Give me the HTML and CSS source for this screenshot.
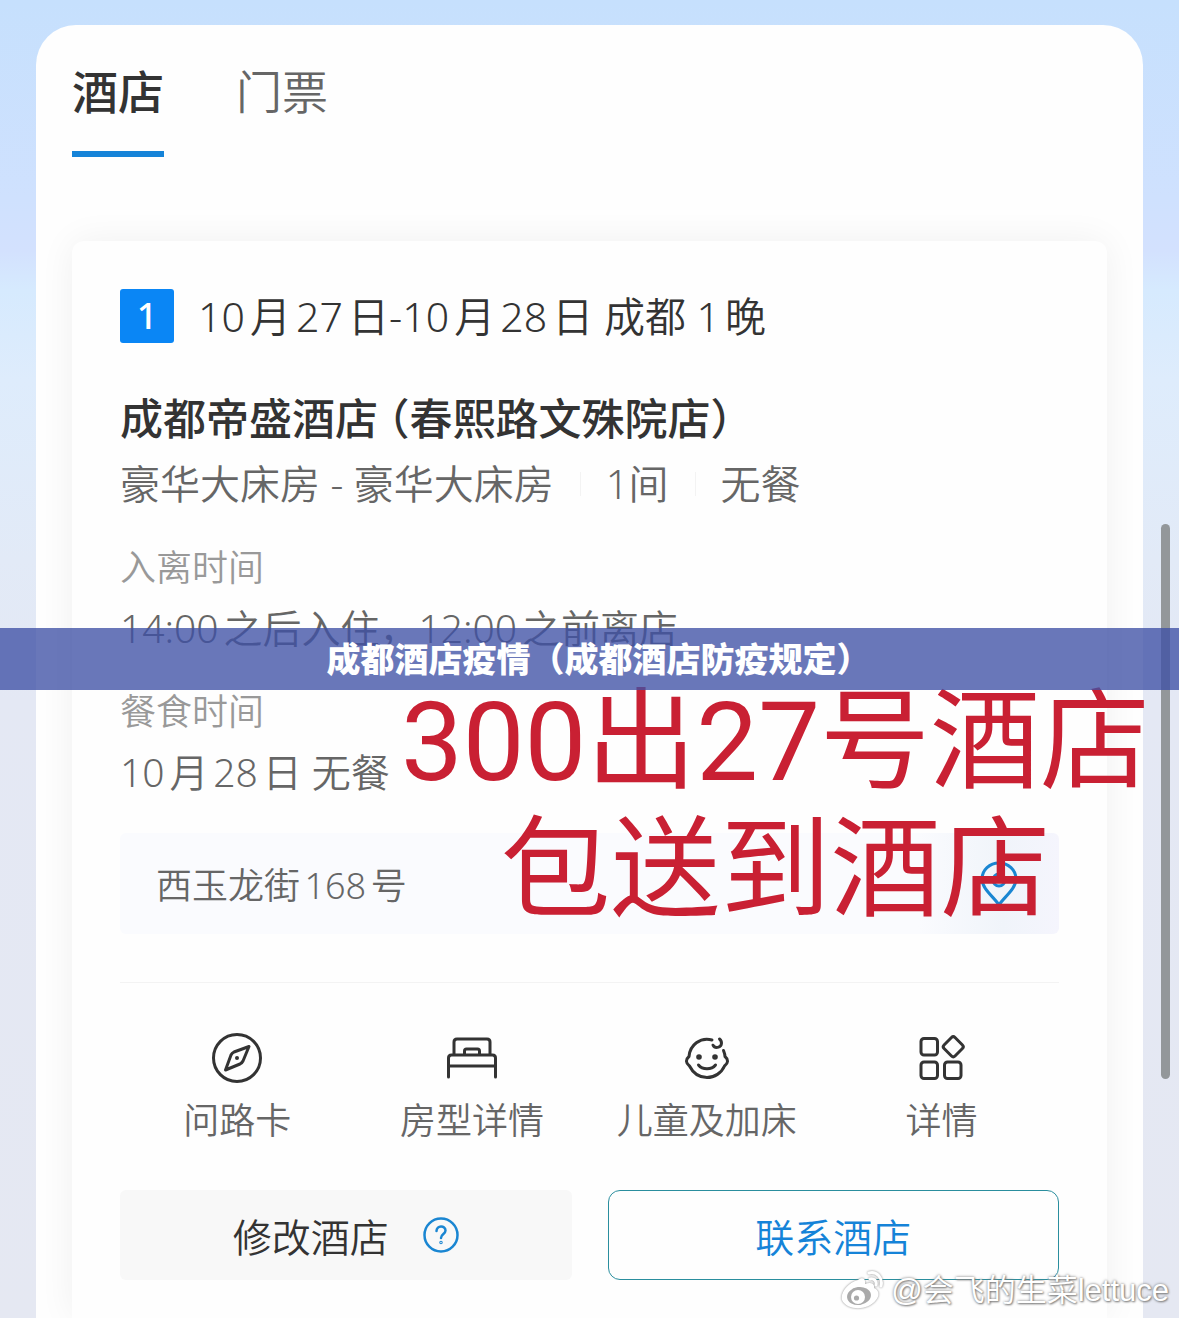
FILE: index.html
```html
<!DOCTYPE html>
<html lang="zh-CN">
<head>
    <meta charset="utf-8">
    <meta name="viewport" content="width=device-width, initial-scale=1">
    <title>成都酒店疫情（成都酒店防疫规定）</title>
    <link rel="stylesheet" href="styles.css">
</head>
<body>
    <main class="sheet">
        <nav class="tabs">
            <a class="tab active" href="#hotel">酒店</a>
            <a class="tab" href="#ticket">门票</a>
        </nav>

        <section class="card" id="hotel">
            <div class="stay">
                <span class="badge">1</span>
                <span>10月27日-10月28日 成都 1晚</span>
            </div>

            <h1 class="hotel-name">成都帝盛酒店<span class="branch">（春熙路文殊院店）</span></h1>
            <div class="room">
                <span>豪华大床房 - 豪华大床房</span>
                <span>1间</span>
                <span>无餐</span>
            </div>

            <dl class="times">
                <dt>入离时间</dt>
                <dd>14:00之后入住，12:00之前离店</dd>
                <dt>餐食时间</dt>
                <dd>10月28日 无餐</dd>
            </dl>

            <a class="address" href="#map">
                <span>西玉龙街168号</span>
                <svg class="pin" viewBox="0 0 38 46" fill="none" stroke="#1a86d2" stroke-width="3">
                    <path d="M19 44C14 36 2 28 2 18a17 16 0 0 1 34 0c0 10-12 18-17 26z"/>
                    <circle cx="19" cy="19" r="6"/>
                </svg>
            </a>

            <div class="actions">
                <a href="#guide">
                    <svg viewBox="0 0 54 54">
                        <circle cx="27" cy="27" r="23.5"/>
                        <path d="M39 15.500L33 30q-1 2-3 3L15.500 39 21 24q1-2 3-3z"/>
                        <circle class="dot" cx="27" cy="27" r="2"/>
                    </svg>
                    问路卡
                </a>
                <a href="#room">
                    <svg viewBox="0 0 54 54">
                        <path d="M9 24V11q0-3 3-3h30q3 0 3 3v13M3.500 46V27q0-3 3-3h41q3 0 3 3v19M3.500 35h47M19.500 24v-4q0-2 2-2h11q2 0 2 2v4"/>
                    </svg>
                    房型详情
                </a>
                <a href="#child">
                    <svg viewBox="0 0 54 54">
                        <path d="M32 9C20 6 10 14 9 25.500c-3.500 3-3.500 6.500 .500 9.500C13 42 19.500 46.500 27 46.500S41.500 42 44.500 35c4-3 4-6.500 .500-9.500 0-2-.500-3.500-1.500-6"/>
                        <path d="M39.500 8c3 2.500 2.500 7-1 8.200-2.500 .800-4.500 0-5.500-2M18.500 34c4 5 13 5 17 0"/>
                        <circle class="dot" cx="19" cy="26" r="2.800"/>
                        <circle class="dot" cx="35" cy="26" r="2.800"/>
                    </svg>
                    儿童及加床
                </a>
                <a href="#detail">
                    <svg viewBox="0 0 54 54">
                        <rect x="6" y="7.500" width="16.500" height="16.500" rx="3"/>
                        <rect x="6" y="31" width="16.500" height="16.500" rx="3"/>
                        <rect x="29.500" y="31" width="16.500" height="16.500" rx="3"/>
                        <rect x="30.500" y="8" width="15.500" height="15.500" rx="2.500" transform="rotate(45 38.250 15.750)"/>
                    </svg>
                    详情
                </a>
            </div>

            <div class="buttons">
                <button class="btn btn-edit" type="button">
                    修改酒店
                    <svg viewBox="0 0 36 36" fill="none" stroke="#1a86d2" stroke-width="2.500" stroke-linecap="round">
                        <circle cx="18" cy="18" r="16.500"/>
                        <path d="M13.500 14c0-6 9-6 9-.500 0 3.500-4.500 3.500-4.500 7.500"/>
                        <circle cx="18" cy="25.500" r=".500"/>
                    </svg>
                </button>
                <button class="btn btn-contact" type="button">联系酒店</button>
            </div>
        </section>
    </main>

    <!-- layers above the page -->
    <div class="scrollbar"></div>
    <p class="note">300出27号酒店<br>包送到酒店</p>
    <div class="banner">成都酒店疫情（成都酒店防疫规定）</div>
    <div class="watermark">
        <svg viewBox="0 0 46 42">
            <path fill="#fff" d="M17 10c4-3 8-2 7 4 5-2 10-1 9 4 5 2 6 7 2 12-8 11-29 11-34 0C-1 22 8 12 17 10z"/>
            <ellipse cx="18" cy="26" rx="12" ry="9" fill="#aaa" transform="rotate(-8 18 26)"/>
            <circle cx="17" cy="27" r="7" fill="#fff"/>
            <circle cx="15.500" cy="28" r="2.600" fill="#aaa"/>
            <path d="M28 3c8-2 14 5 12 13M29 9c4-1 7 2 6 6" fill="none" stroke="#fff" stroke-width="3" stroke-linecap="round"/>
        </svg>
        @会飞的生菜lettuce
    </div>
</body>
</html>
```
FILE: styles.css
```css
* {
    box-sizing: border-box;
}
body {
    position: relative;
    min-height: 100vh;
    margin: 0;
    padding: 25px 36px 0;
    overflow-x: hidden;
    background: linear-gradient(#c6e0fd, #cfe1fe 200px, #d3e1fe 250px, #d6eafe 290px, #deecfc 380px, #e2eaf7 560px, #e4e8f4 700px, #e5e8f2);
    font-family: "Noto Sans", "Noto Sans CJK SC", sans-serif;
    font-weight: 350;
    color: #333;
    text-autospace: normal;
}
a {
    color: inherit;
    text-decoration: none;
}
.sheet {
    padding: 36px 36px 0;
    border-radius: 40px 40px 0 0;
    background: #fefefe;
}
.tabs {
    display: flex;
    gap: 72px;
}
.tab {
    padding-bottom: 30px;
    border-bottom: 6px solid transparent;
    font-size: 46px;
    line-height: 60px;
    color: #666;
}
.tab.active {
    border-color: #1583d8;
    font-weight: 500;
    color: #333;
}
.card {
    margin-top: 84px;
    padding: 48px 48px 38px;
    border-radius: 12px 12px 0 0;
    background: #fefefe;
    box-shadow: 0 0 36px rgba(0, 0, 0, 0.06);
}
.stay {
    display: flex;
    align-items: center;
    gap: 24px;
    font-size: 41px;
    line-height: 54px;
}
.badge {
    width: 54px;
    border-radius: 3px;
    background: #0a86f5;
    color: #fff;
    font-size: 36px;
    font-weight: 500;
    text-align: center;
}
.hotel-name {
    margin: 49px 0 13px;
    font-size: 43px;
    font-weight: 500;
    line-height: 54px;
}
.branch {
    margin-left: 10px;
    font-feature-settings: "halt";
}
.room {
    display: flex;
    align-items: center;
    font-size: 40px;
    line-height: 50px;
    color: #666;
    text-autospace: no-autospace;
}
.room span + span {
    margin-left: 26px;
    padding-left: 26px;
    background: linear-gradient(#f3f3f3, #f3f3f3) left center / 1px 24px no-repeat;
}
.times {
    margin: 35px 0 37px;
    line-height: 48px;
}
.times dt {
    font-size: 36px;
    color: #999;
}
.times dd {
    margin: 12px 0 36px;
    font-size: 39px;
    color: #666;
}
.times dd:last-child {
    margin-bottom: 0;
}
.address {
    display: flex;
    align-items: center;
    justify-content: space-between;
    height: 101px;
    padding: 0 41px 0 36px;
    border-radius: 6px;
    background: linear-gradient(90deg, #fafbfe 85%, #f0f4fa 94%, #f5f5fd);
    font-size: 36px;
    color: #666;
}
.pin {
    width: 38px;
    height: 46px;
}
.actions {
    display: grid;
    grid-template-columns: repeat(4, 1fr);
    margin-top: 48px;
    padding-top: 48px;
    border-top: 1px solid #f3f3f3;
    font-size: 36px;
    line-height: 48px;
    color: #666;
}
.actions a {
    display: flex;
    flex-direction: column;
    align-items: center;
    gap: 12px;
}
.actions svg {
    width: 54px;
    height: 54px;
    fill: none;
    stroke: #333;
    stroke-width: 3;
    stroke-linecap: round;
    stroke-linejoin: round;
}
.actions .dot {
    fill: #333;
    stroke: none;
}
.buttons {
    display: grid;
    grid-template-columns: 1fr 1fr;
    gap: 36px;
    margin-top: 45px;
}
.btn {
    display: flex;
    align-items: center;
    justify-content: center;
    gap: 34px;
    height: 90px;
    padding: 0;
    border: 0;
    border-radius: 6px;
    font-family: inherit;
    font-size: 39px;
    font-weight: 350;
}
.btn svg {
    width: 36px;
    height: 36px;
}
.btn-edit {
    background: #f8f8f8;
    color: #333;
}
.btn-contact {
    border: 1px solid #2a8e9e;
    border-radius: 12px;
    background: #fefefe;
    color: #1583d8;
}
.scrollbar {
    position: absolute;
    top: 524px;
    right: 9px;
    width: 9px;
    height: 555px;
    border-radius: 5px;
    background: #93979a;
}
.note {
    position: absolute;
    top: 679px;
    right: 29px;
    margin: 0;
    font-family: Roboto, "Noto Sans CJK SC", sans-serif;
    font-size: 110px;
    font-weight: 400;
    line-height: 128px;
    color: #c92033;
    text-align: center;
    text-autospace: no-autospace;
    white-space: nowrap;
}
.banner {
    position: absolute;
    top: 628px;
    left: 0;
    width: 100%;
    padding-left: 18px;
    background: rgba(63, 81, 165, 0.78);
    color: #fff;
    font-size: 34px;
    font-weight: 900;
    line-height: 62px;
    text-align: center;
}
.watermark {
    position: absolute;
    right: 10px;
    bottom: 6px;
    display: flex;
    align-items: center;
    gap: 4px;
    font-family: "Liberation Sans", "Noto Sans CJK SC", sans-serif;
    font-size: 31px;
    line-height: 40px;
    color: #fff;
    text-autospace: no-autospace;
    text-shadow: 0 0 3px #777, 1px 1px 2px #888;
}
.watermark svg {
    width: 46px;
    height: 42px;
    filter: drop-shadow(0 0 1px #888);
}
```
